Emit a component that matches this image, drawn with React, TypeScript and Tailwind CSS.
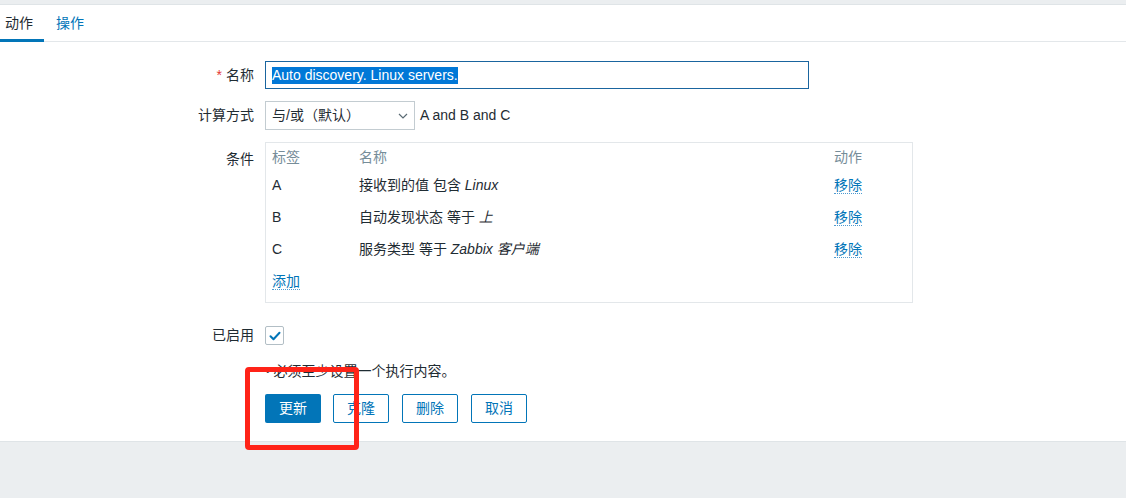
import React from "react";

const font = {
  fontFamily: '"Liberation Sans", Arial, "Noto Sans CJK SC", sans-serif',
};

function Link({ children }: { children: React.ReactNode }) {
  return (
    <span className="text-[#0275b8] border-b border-dotted border-[#4f9bd0] leading-[16px] cursor-pointer">
      {children}
    </span>
  );
}

export default function App() {
  const rows = [
    { l: "A", pre: "接收到的值 包含 ", it: "Linux" },
    { l: "B", pre: "自动发现状态 等于 ", it: "上" },
    { l: "C", pre: "服务类型 等于 ", it: "Zabbix 客户端" },
  ];
  return (
    <div
      className="relative w-[1126px] h-[498px] bg-[#ebeef0] text-[14px] text-[#1f2c33] overflow-hidden"
      style={font}
    >
      <div className="h-[4px] bg-[#ebeef0] border-b border-[#dfe4e7] box-content" />
      <div className="bg-white border-b border-[#dfe4e7]">
        {/* Tabs */}
        <div className="flex h-[37px] border-b border-[#e3e7ea]">
          <div className="relative w-[44px] pl-[5px] flex items-center text-[#1f2c33]">
            动作
            <div className="absolute left-0 right-0 bottom-[-1px] h-[3px] bg-[#0275b8]" />
          </div>
          <div className="pl-[12px] flex items-center text-[#0275b8]">操作</div>
        </div>

        {/* Form */}
        <div className="pt-[19px] pb-[18px]">
          {/* Name */}
          <div className="flex items-center h-[28px]">
            <div className="w-[254px] text-right">
              <span className="text-[#e33734] mr-[4px]">*</span>名称
            </div>
            <div className="ml-[11px] w-[544px] h-[28px] border border-[#1a659f] flex items-center pl-[6px]">
              <span className="bg-[#0078d7] text-white leading-[17px]">
                Auto discovery. Linux servers.
              </span>
            </div>
          </div>

          {/* Calc */}
          <div className="flex items-center h-[29px] mt-[12px]">
            <div className="w-[254px] text-right">计算方式</div>
            <div className="ml-[11px] w-[150px] h-[29px] border border-[#c3ccd1] flex items-center justify-between pl-[6px] pr-[6px]">
              <span>与/或（默认）</span>
              <svg width="10" height="6" viewBox="0 0 10 6" fill="none">
                <path d="M1 1l4 4 4-4" stroke="#5b6b74" strokeWidth="1.2" />
              </svg>
            </div>
            <span className="ml-[5px]">A and B and C</span>
          </div>

          {/* Conditions */}
          <div className="flex mt-[12px]">
            <div className="w-[254px] text-right pt-[7px]">条件</div>
            <div className="ml-[11px] w-[648px] border border-[#e3e7ea] pt-[3px] pb-[5px] px-[6px]">
              <div className="grid grid-cols-[87px_1fr_72px] h-[23px] items-center text-[#768d99]">
                <span>标签</span>
                <span>名称</span>
                <span>动作</span>
              </div>
              {rows.map((r) => (
                <div
                  key={r.l}
                  className="grid grid-cols-[87px_1fr_72px] h-[32px] items-center"
                >
                  <span>{r.l}</span>
                  <span>
                    {r.pre}
                    <i>{r.it}</i>
                  </span>
                  <span>
                    <Link>移除</Link>
                  </span>
                </div>
              ))}
              <div className="h-[32px] flex items-center">
                <Link>添加</Link>
              </div>
            </div>
          </div>

          {/* Enabled */}
          <div className="flex items-center h-[19px] mt-[23px]">
            <div className="w-[254px] text-right">已启用</div>
            <div className="ml-[11px] w-[19px] h-[19px] border border-[#b2bec5] rounded-[2px] flex items-center justify-center bg-white">
              <svg width="12" height="10" viewBox="0 0 12 10" fill="none">
                <path
                  d="M1.5 5.2l3 3L10.5 1.8"
                  stroke="#0275b8"
                  strokeWidth="2"
                  strokeLinecap="round"
                  strokeLinejoin="round"
                />
              </svg>
            </div>
          </div>

          {/* Message */}
          <div className="flex items-center h-[18px] mt-[17px]">
            <div className="w-[254px]" />
            <span className="ml-[12px] text-[#1f2c33]">
              <span className="text-[10px] mr-[4px] align-middle">•</span>必须至少设置一个执行内容。
            </span>
          </div>

          {/* Buttons */}
          <div className="flex items-center h-[29px] mt-[14px]">
            <div className="w-[254px]" />
            <button className="ml-[11px] w-[56px] h-[29px] bg-[#0275b8] text-white rounded-[2px]">
              更新
            </button>
            <button className="ml-[12px] w-[56px] h-[29px] border border-[#0275b8] text-[#0275b8] bg-white rounded-[2px]">
              克隆
            </button>
            <button className="ml-[13px] w-[56px] h-[29px] border border-[#0275b8] text-[#0275b8] bg-white rounded-[2px]">
              删除
            </button>
            <button className="ml-[13px] w-[56px] h-[29px] border border-[#0275b8] text-[#0275b8] bg-white rounded-[2px]">
              取消
            </button>
          </div>
        </div>
      </div>

      {/* Red annotation box */}
      <div className="absolute left-[245px] top-[367px] w-[114px] h-[83px] border-[5px] border-[#ff2318] rounded-[4px] pointer-events-none" />
    </div>
  );
}
